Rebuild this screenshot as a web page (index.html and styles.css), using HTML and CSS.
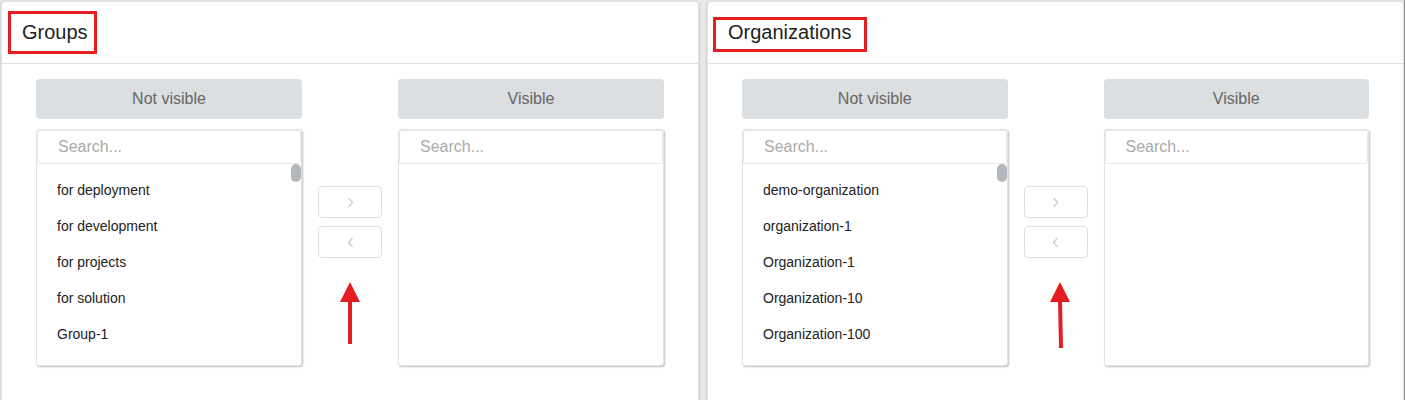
FILE: index.html
```html
<!DOCTYPE html>
<html lang="en">
<head>
    <meta charset="UTF-8">
    <meta name="viewport" content="width=device-width, initial-scale=1.0">
    <title>Visibility settings</title>
    <link rel="stylesheet" href="styles.css">
</head>
<body>
    <div class="page">
        <section class="card card-groups">
            <div class="card-header">
                <h2 class="card-title">Groups</h2>
                <span class="mark mark-groups"></span>
            </div>
            <div class="transfer">
                <div class="side-label">Not visible</div>
                <div class="mid-label"></div>
                <div class="side-label">Visible</div>

                <div class="list-box">
                    <input class="search" type="text" placeholder="Search...">
                    <ul class="items">
                        <li>for deployment</li>
                        <li>for development</li>
                        <li>for projects</li>
                        <li>for solution</li>
                        <li>Group-1</li>
                    </ul>
                    <span class="thumb"></span>
                </div>
                <div class="actions">
                    <button class="move-btn" type="button">
                        <svg width="7" height="11" viewBox="0 0 7 11"><path d="M1.5 1l4 4.5-4 4.5" fill="none" stroke="#cfcfcf" stroke-width="1.5"/></svg>
                    </button>
                    <button class="move-btn" type="button">
                        <svg width="7" height="11" viewBox="0 0 7 11"><path d="M5.5 1l-4 4.5 4 4.5" fill="none" stroke="#cfcfcf" stroke-width="1.5"/></svg>
                    </button>
                    <svg class="pointer" width="24" height="66" viewBox="0 0 24 66">
                        <polygon points="12,0 22,20 2,20" fill="#e41e20"/>
                        <rect x="10" y="18" width="4" height="44" fill="#e41e20"/>
                    </svg>
                </div>
                <div class="list-box">
                    <input class="search" type="text" placeholder="Search...">
                    <ul class="items"></ul>
                </div>
            </div>
        </section>

        <section class="card card-orgs">
            <div class="card-header">
                <h2 class="card-title">Organizations</h2>
                <span class="mark mark-orgs"></span>
            </div>
            <div class="transfer">
                <div class="side-label">Not visible</div>
                <div class="mid-label"></div>
                <div class="side-label">Visible</div>

                <div class="list-box">
                    <input class="search" type="text" placeholder="Search...">
                    <ul class="items">
                        <li>demo-organization</li>
                        <li>organization-1</li>
                        <li>Organization-1</li>
                        <li>Organization-10</li>
                        <li>Organization-100</li>
                    </ul>
                    <span class="thumb"></span>
                </div>
                <div class="actions">
                    <button class="move-btn" type="button">
                        <svg width="7" height="11" viewBox="0 0 7 11"><path d="M1.5 1l4 4.5-4 4.5" fill="none" stroke="#cfcfcf" stroke-width="1.5"/></svg>
                    </button>
                    <button class="move-btn" type="button">
                        <svg width="7" height="11" viewBox="0 0 7 11"><path d="M5.5 1l-4 4.5 4 4.5" fill="none" stroke="#cfcfcf" stroke-width="1.5"/></svg>
                    </button>
                    <svg class="pointer pointer-tilt" width="24" height="70" viewBox="0 0 24 70">
                        <polygon points="11,0 21,20 1,20" fill="#e41e20"/>
                        <polygon points="9,18 13,18 14,66 10,66" fill="#e41e20"/>
                    </svg>
                </div>
                <div class="list-box">
                    <input class="search" type="text" placeholder="Search...">
                    <ul class="items"></ul>
                </div>
            </div>
        </section>
    </div>
</body>
</html>
```

FILE: styles.css
```css
body {
    margin: 0;
    background-color: #e9e9e9;
    font-family: "Liberation Sans", Arial, sans-serif;
    color: #222;
    overflow: hidden;
}

.page {
    display: flex;
    gap: 8px;
    padding: 1px 0 0 1px;
    border-right: 1px solid #9a9a9a;
    height: 420px;
}

.card {
    position: relative;
    background: #fff;
    border: 1px solid #e2e2e2;
    border-radius: 4px;
    box-shadow: 0 1px 3px rgba(0, 0, 0, 0.22);
}

.card-groups {
    width: 698px;
    box-sizing: border-box;
}

.card-orgs {
    flex: 1;
}

.card-header {
    height: 61px;
    display: flex;
    align-items: center;
    padding-left: 20px;
    border-bottom: 1px solid #e0e0e0;
}

.card-title {
    margin: 0;
    font-size: 20px;
    font-weight: normal;
    color: #222;
}

/* red annotation frames */
.mark {
    position: absolute;
    border: 3px solid #e41e20;
    box-sizing: border-box;
}

.mark-groups {
    left: 6px;
    top: 9px;
    width: 89px;
    height: 43px;
}

.mark-orgs {
    left: 5px;
    top: 15px;
    width: 154px;
    height: 35px;
}

.transfer {
    display: grid;
    grid-template-columns: 1fr 96px 1fr;
    row-gap: 10px;
    padding: 15px 34px 40px;
}

.side-label {
    height: 40px;
    line-height: 40px;
    text-align: center;
    background-color: #dcdfe2;
    border-radius: 4px;
    font-size: 16px;
    color: #666;
}

.list-box {
    position: relative;
    height: 237px;
    box-sizing: border-box;
    display: flex;
    flex-direction: column;
    border: 1px solid #e3e3e3;
    border-radius: 3px;
    box-shadow: 1px 1px 2px rgba(0, 0, 0, 0.25);
    background: #fff;
}

.search {
    height: 34px;
    box-sizing: border-box;
    margin: 0;
    padding: 0 0 0 20px;
    border: 1px solid #e8e8e8;
    border-radius: 3px;
    font-family: inherit;
    font-size: 16px;
    color: #333;
    outline: none;
    flex-shrink: 0;
}

.search::placeholder {
    color: #aaa;
}

.items {
    list-style: none;
    margin: 0;
    padding: 8px 0 0;
    flex: 1;
    overflow: hidden;
}

.items li {
    height: 36px;
    line-height: 36px;
    padding-left: 20px;
    font-size: 14px;
    color: #222;
}

/* scrollbar thumb of the long list */
.thumb {
    position: absolute;
    top: 34px;
    right: 0;
    width: 10px;
    height: 18px;
    background-color: #b4b8bc;
    border-radius: 5px;
}

.actions {
    display: flex;
    flex-direction: column;
    align-items: center;
    gap: 8px;
    padding-top: 57px;
}

.move-btn {
    width: 64px;
    height: 32px;
    display: flex;
    justify-content: center;
    align-items: center;
    padding: 0;
    background: #fff;
    border: 1px solid #dedede;
    border-radius: 4px;
}

.pointer {
    margin-top: 16px;
}

.pointer-tilt {
    margin-top: 16px;
    margin-left: 10px;
}
```
